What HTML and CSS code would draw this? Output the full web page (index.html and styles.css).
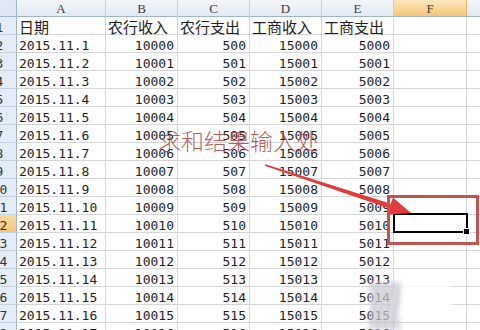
FILE: index.html
```html
<!DOCTYPE html>
<html lang="zh">
<head>
<meta charset="utf-8">
<title>Sheet</title>
<link rel="stylesheet" href="styles.css">
</head>
<body>
<div class="page">
  <div class="sheet">
    <div class="corner"></div>
    <div class="ch">A</div><div class="ch">B</div><div class="ch">C</div><div class="ch">D</div><div class="ch">E</div><div class="ch ch-sel">F</div><div class="ch">G</div>

    <div class="rh">1</div><div class="c zh">日期</div><div class="c zh">农行收入</div><div class="c zh">农行支出</div><div class="c zh">工商收入</div><div class="c zh">工商支出</div><div class="c"></div><div class="c"></div>
    <div class="rh">2</div><div class="c t">2015.11.1</div><div class="c n">10000</div><div class="c n">500</div><div class="c n">15000</div><div class="c n">5000</div><div class="c"></div><div class="c"></div>
    <div class="rh">3</div><div class="c t">2015.11.2</div><div class="c n">10001</div><div class="c n">501</div><div class="c n">15001</div><div class="c n">5001</div><div class="c"></div><div class="c"></div>
    <div class="rh">4</div><div class="c t">2015.11.3</div><div class="c n">10002</div><div class="c n">502</div><div class="c n">15002</div><div class="c n">5002</div><div class="c"></div><div class="c"></div>
    <div class="rh">5</div><div class="c t">2015.11.4</div><div class="c n">10003</div><div class="c n">503</div><div class="c n">15003</div><div class="c n">5003</div><div class="c"></div><div class="c"></div>
    <div class="rh">6</div><div class="c t">2015.11.5</div><div class="c n">10004</div><div class="c n">504</div><div class="c n">15004</div><div class="c n">5004</div><div class="c"></div><div class="c"></div>
    <div class="rh">7</div><div class="c t">2015.11.6</div><div class="c n">10005</div><div class="c n">505</div><div class="c n">15005</div><div class="c n">5005</div><div class="c"></div><div class="c"></div>
    <div class="rh">8</div><div class="c t">2015.11.7</div><div class="c n">10006</div><div class="c n">506</div><div class="c n">15006</div><div class="c n">5006</div><div class="c"></div><div class="c"></div>
    <div class="rh">9</div><div class="c t">2015.11.8</div><div class="c n">10007</div><div class="c n">507</div><div class="c n">15007</div><div class="c n">5007</div><div class="c"></div><div class="c"></div>
    <div class="rh">10</div><div class="c t">2015.11.9</div><div class="c n">10008</div><div class="c n">508</div><div class="c n">15008</div><div class="c n">5008</div><div class="c"></div><div class="c"></div>
    <div class="rh">11</div><div class="c t">2015.11.10</div><div class="c n">10009</div><div class="c n">509</div><div class="c n">15009</div><div class="c n">5009</div><div class="c"></div><div class="c"></div>
    <div class="rh rh-sel">12</div><div class="c t">2015.11.11</div><div class="c n">10010</div><div class="c n">510</div><div class="c n">15010</div><div class="c n">5010</div><div class="c active"><span class="sel"><span class="handle"></span></span></div><div class="c"></div>
    <div class="rh">13</div><div class="c t">2015.11.12</div><div class="c n">10011</div><div class="c n">511</div><div class="c n">15011</div><div class="c n">5011</div><div class="c"></div><div class="c"></div>
    <div class="rh">14</div><div class="c t">2015.11.13</div><div class="c n">10012</div><div class="c n">512</div><div class="c n">15012</div><div class="c n">5012</div><div class="c"></div><div class="c"></div>
    <div class="rh">15</div><div class="c t">2015.11.14</div><div class="c n">10013</div><div class="c n">513</div><div class="c n">15013</div><div class="c n">5013</div><div class="c"></div><div class="c"></div>
    <div class="rh">16</div><div class="c t">2015.11.15</div><div class="c n">10014</div><div class="c n">514</div><div class="c n">15014</div><div class="c n">5014</div><div class="c"></div><div class="c"></div>
    <div class="rh">17</div><div class="c t">2015.11.16</div><div class="c n">10015</div><div class="c n">515</div><div class="c n">15015</div><div class="c n">5015</div><div class="c"></div><div class="c"></div>
    <div class="rh">18</div><div class="c t">2015.11.17</div><div class="c n">10016</div><div class="c n">516</div><div class="c n">15016</div><div class="c n">5016</div><div class="c"></div><div class="c"></div>
  </div>

  <div class="note">求和结果输入处</div>
  <svg class="arrow" width="480" height="330" viewBox="0 0 480 330" aria-hidden="true">
    <polygon points="264.7,165.8 265.3,164.2 390.9,203.7 392.9,197.5 411,213 387.3,214.7 389.3,208.5" fill="#e13b3b"/>
  </svg>
  <div class="redbox"></div>
  <div class="wm"><div class="wm-white"></div><div class="wm-fan"></div></div>
</div>
</body>
</html>
```
FILE: styles.css
```css
html, body {
  margin: 0;
  padding: 0;
  width: 480px;
  height: 330px;
  overflow: hidden;
  background: #ffffff;
}

.page {
  position: relative;
  width: 480px;
  height: 330px;
  overflow: hidden;
}

.sheet {
  display: grid;
  grid-template-columns: 34px 89px 72px 72px 72px 72px 73px 72px;
  grid-template-rows: 17px repeat(18, 18px);
  margin-left: -17px;
  font-family: "DejaVu Sans Mono", "Noto Sans CJK SC", monospace;
  font-size: 13px;
  color: #1e1e1e;
}

.corner {
  box-sizing: border-box;
  border-right: 1px solid #9eb6ce;
  border-bottom: 1px solid #9eb6ce;
  background: linear-gradient(135deg, #e9eff8 0%, #dbe4f0 100%);
}

.ch {
  box-sizing: border-box;
  border-right: 1px solid #c5d2e2;
  border-bottom: 1px solid #9eb6ce;
  background: linear-gradient(#f3f6fb, #e2e9f3);
  font-family: "Liberation Serif", serif;
  font-size: 13px;
  color: #3c3c3c;
  text-align: center;
  line-height: 17px;
}

.ch-sel {
  background: linear-gradient(#fce7bd, #f6c575);
  border-right-color: #e0b26a;
}

.rh {
  box-sizing: border-box;
  border-right: 1px solid #9eb6ce;
  border-bottom: 1px solid #c5d2e2;
  background: #e4ecf7;
  text-align: center;
  color: #333333;
  padding-top: 3px;
  line-height: 16px;
}

.rh-sel {
  background: linear-gradient(#fbdca3, #f6c677);
}

.c {
  box-sizing: border-box;
  border-right: 1px solid #d6d6d6;
  border-bottom: 1px solid #d6d6d6;
  padding: 3px 3px 0 2px;
  line-height: 16px;
  white-space: nowrap;
  overflow: visible;
}

.t { text-align: left; }
.n { text-align: right; }

.zh {
  font-family: "Noto Sans CJK SC", sans-serif;
  font-size: 15px;
  padding-top: 1px;
  line-height: 17px;
  text-align: left;
}

.active { position: relative; }

.sel {
  position: absolute;
  top: -2px;
  left: -1px;
  right: -2px;
  bottom: -1px;
  border: 2px solid #000000;
}

.handle {
  position: absolute;
  right: -4px;
  bottom: -4px;
  width: 5px;
  height: 5px;
  background: #000000;
  border: 1px solid #ffffff;
}

.note {
  position: absolute;
  left: 158px;
  top: 129px;
  font-family: "Noto Sans CJK SC", sans-serif;
  font-weight: 300;
  font-size: 23px;
  line-height: 23px;
  color: rgba(176, 62, 62, 0.85);
  white-space: nowrap;
}

.arrow {
  position: absolute;
  left: 0;
  top: 0;
}

.redbox {
  position: absolute;
  left: 387px;
  top: 195px;
  width: 92px;
  height: 50px;
  box-sizing: border-box;
  border: 3px solid #c65252;
}

.wm {
  position: absolute;
  left: 366px;
  top: 280px;
  width: 100px;
  height: 50px;
}

.wm-white {
  position: absolute;
  left: 26px;
  top: 4px;
  width: 60px;
  height: 28px;
  background: #ffffff;
  filter: blur(3px);
}

.wm-fan {
  position: absolute;
  left: 4px;
  top: 2px;
  width: 30px;
  height: 48px;
  background: repeating-linear-gradient(100deg, #9a97a6 0 3px, #eeedf2 3px 7px);
  filter: blur(2.5px);
  opacity: 0.75;
}
```
